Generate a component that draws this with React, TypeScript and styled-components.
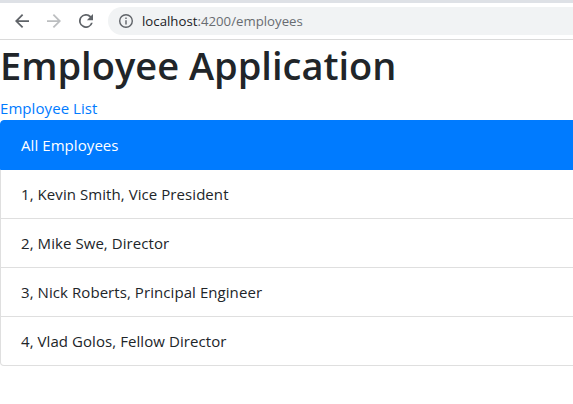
import React from "react";
import styled, { createGlobalStyle } from "styled-components";

const GlobalStyle = createGlobalStyle`
  * { box-sizing: border-box; }
  body {
    margin: 0;
    overflow: hidden;
    background: #fff;
    color: #212529;
    font: 400 15px/24px "Segoe UI", "Open Sans", "Noto Sans", sans-serif;
    letter-spacing: 0.07px;
  }
`;

const TabStrip = styled.div`
  height: 3px;
  background: #dee1e6;
`;

const Toolbar = styled.div`
  display: flex;
  align-items: center;
  height: 37px;
  padding-left: 15px;
  border-bottom: 1px solid #dadada;
`;

const NavIcon = styled.svg<{ $disabled?: boolean }>`
  flex: none;
  width: 14px;
  height: 14px;
  margin-right: 18px;
  fill: ${(p) => (p.$disabled ? "#bcbec0" : "#5f6368")};
`;

const AddressBar = styled.div`
  display: flex;
  align-items: center;
  flex: 1;
  height: 28px;
  margin-left: -3px;
  padding-left: 11px;
  border-radius: 14px 0 0 14px;
  background: #f1f3f4;
`;

const InfoIcon = styled.svg`
  width: 14px;
  height: 14px;
  margin-right: 9px;
  fill: #5f6368;
`;

const Url = styled.span`
  font-size: 13.2px;
  line-height: 20px;
  letter-spacing: 0.02px;
  color: #686c71;
`;

const Host = styled.span`
  color: #202124;
`;

const Title = styled.h1`
  margin: 0 0 6px;
  font-size: 38px;
  line-height: 50px;
  font-weight: 600;
  letter-spacing: 0;
  white-space: nowrap;
`;

const RouteLink = styled.a`
  display: block;
  color: #007bff;
`;

const List = styled.ul`
  width: 600px;
  margin: 0;
  padding: 0;
  list-style: none;
`;

const Item = styled.li<{ $active?: boolean }>`
  padding: 12px 20px;
  border: 1px solid ${(p) => (p.$active ? "#007bff" : "#dfdfdf")};
  border-top-width: ${(p) => (p.$active ? "1px" : "0")};
  background: ${(p) => (p.$active ? "#007bff" : "#fff")};
  color: ${(p) => (p.$active ? "#fff" : "inherit")};
  &:first-child { border-radius: 4px 4px 0 0; }
  &:last-child { border-radius: 0 0 4px 4px; }
`;

const employees = [
  { id: 1, name: "Kevin Smith", role: "Vice President" },
  { id: 2, name: "Mike Swe", role: "Director" },
  { id: 3, name: "Nick Roberts", role: "Principal Engineer" },
  { id: 4, name: "Vlad Golos", role: "Fellow Director" },
];

export default function App() {
  return (
    <>
      <GlobalStyle />
      <TabStrip />
      <Toolbar>
        <NavIcon viewBox="4 4 16 16">
          <path d="M20 11H7.83l5.59-5.59L12 4l-8 8 8 8 1.41-1.41L7.83 13H20z" />
        </NavIcon>
        <NavIcon viewBox="4 4 16 16" $disabled>
          <path d="M12 4l-1.41 1.41L16.17 11H4v2h12.17l-5.58 5.59L12 20l8-8z" />
        </NavIcon>
        <NavIcon viewBox="4 4 16 16">
          <path d="M17.65 6.35A8 8 0 1 0 19.73 14h-2.08A6 6 0 1 1 12 6c1.66 0 3.14.69 4.22 1.78L13 11h7V4z" />
        </NavIcon>
        <AddressBar>
          <InfoIcon viewBox="2 2 20 20">
            <path d="M11 7h2v2h-2zm0 4h2v6h-2zm1-9a10 10 0 1 0 0 20 10 10 0 0 0 0-20zm0 18a8 8 0 1 1 0-16 8 8 0 0 1 0 16z" />
          </InfoIcon>
          <Url>
            <Host>localhost</Host>:4200/employees
          </Url>
        </AddressBar>
      </Toolbar>
      <Title>Employee Application</Title>
      <RouteLink>Employee List</RouteLink>
      <List>
        <Item $active>All Employees</Item>
        {employees.map((e) => (
          <Item key={e.id}>{`${e.id}, ${e.name}, ${e.role}`}</Item>
        ))}
      </List>
    </>
  );
}
